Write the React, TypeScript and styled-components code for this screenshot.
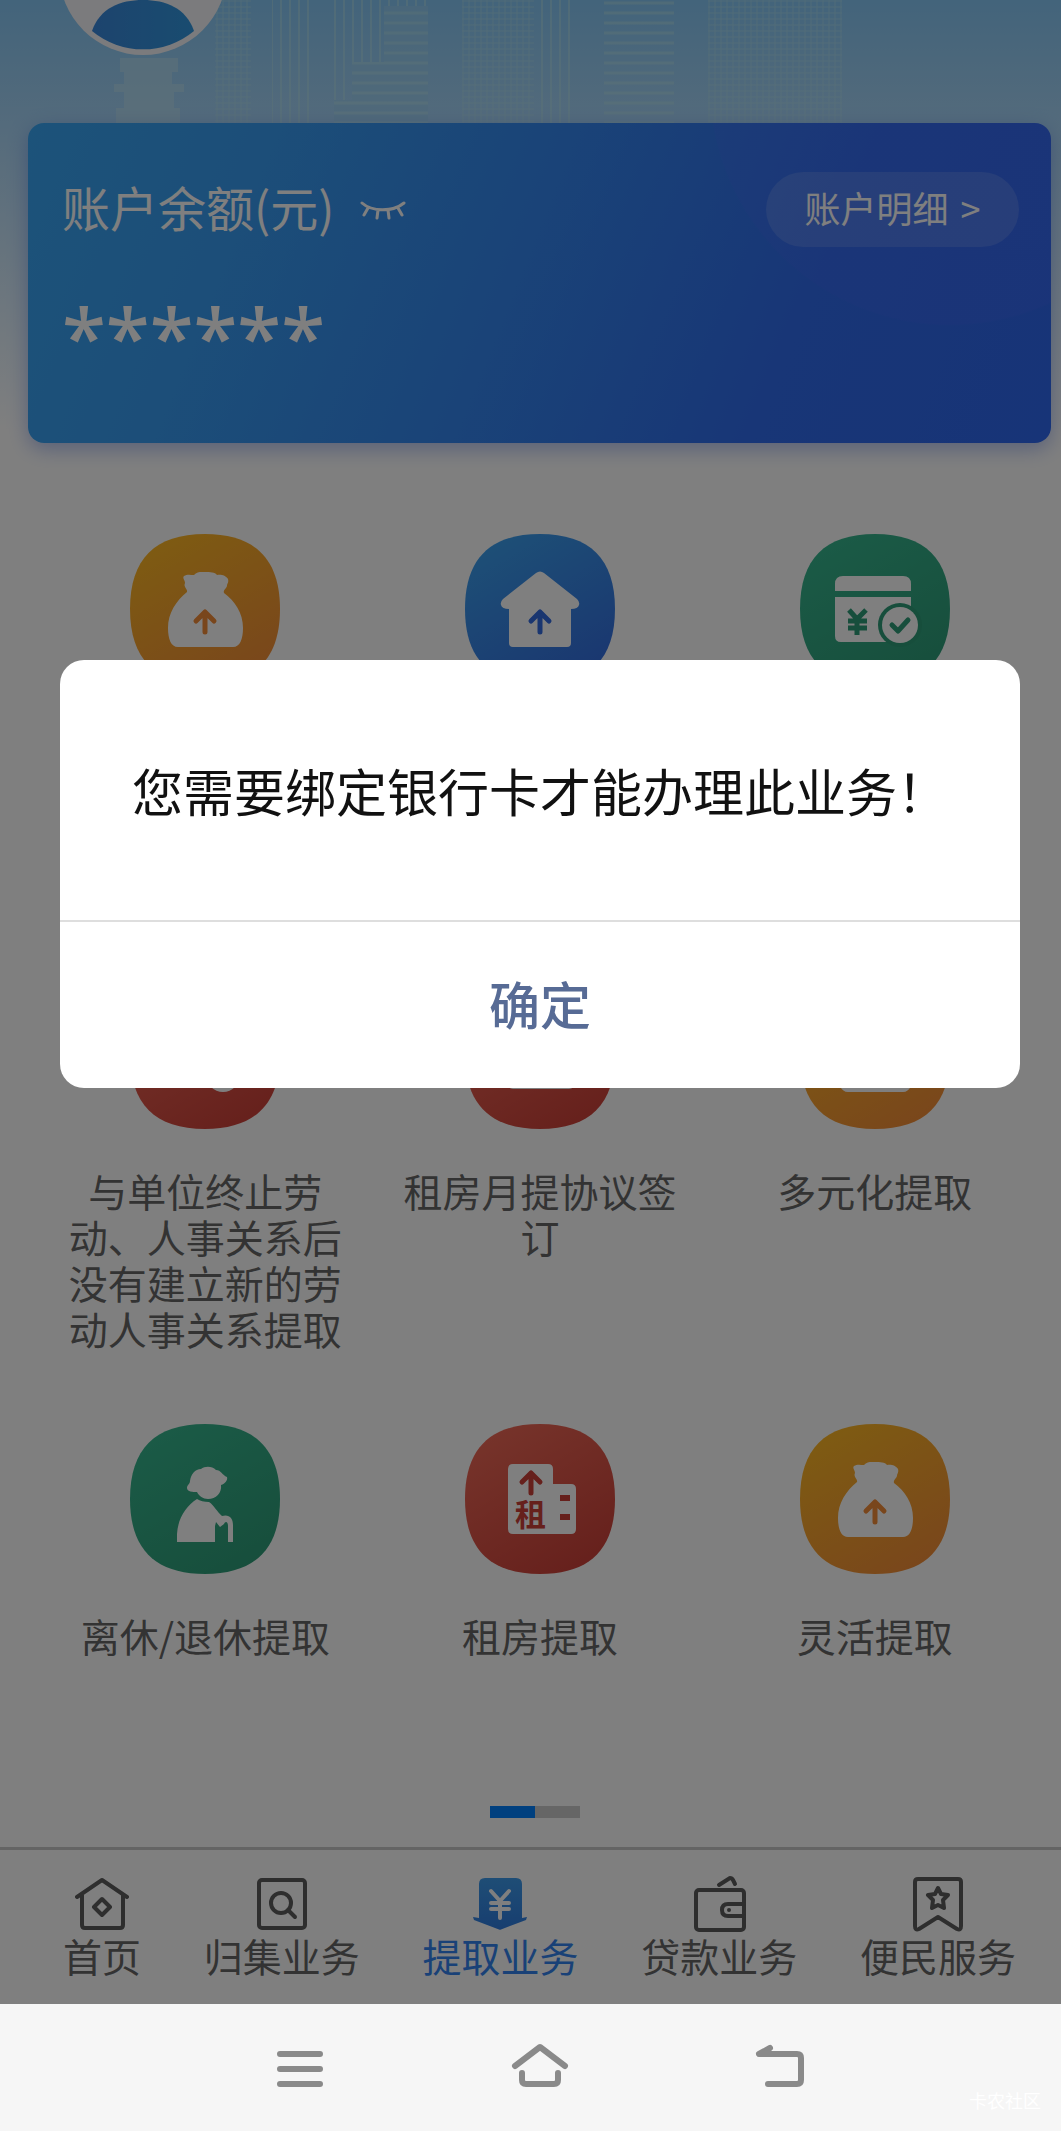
import React from "react";
import styled, { createGlobalStyle } from "styled-components";

const GlobalStyle = createGlobalStyle`
  *, *::before, *::after { box-sizing: border-box; }
  body {
    margin: 0;
    background: #f6f6f6;
    font-family: "Noto Sans CJK SC", "Noto Sans", sans-serif;
  }
  button { border: 0; padding: 0; background: none; font: inherit; color: inherit; cursor: pointer; }
  a { color: inherit; text-decoration: none; }
  svg { display: block; }
`;

const Phone = styled.div`
  display: flex;
  flex-direction: column;
  min-height: 100vh;
  overflow: hidden;
`;

const Screen = styled.div`
  position: relative;
  display: flex;
  flex-direction: column;
  flex: 1;
  background: linear-gradient(#86c8f6 0, #a8d6f8 123px, #ffffff 430px);
`;

const Banner = styled.header`
  height: 123px;
  overflow: hidden;
`;

const BalanceCard = styled.section`
  display: flex;
  flex-direction: column;
  height: 320px;
  margin: 0 10px 0 28px;
  padding: 49px 32px 0 34px;
  border-radius: 16px;
  background:
    radial-gradient(circle at 922px -38px, rgba(90, 100, 255, 0.12) 239px, transparent 241px),
    linear-gradient(112deg, #38a6f4 0%, #389cf2 22%, #3486f0 48%, #306cee 74%, #2f68f0 100%);
  box-shadow: 0 6px 20px rgba(60, 100, 220, 0.4);
  color: #fff;
`;

const BalanceHead = styled.div`
  display: flex;
  align-items: center;
  height: 75px;
`;

const BalanceTitle = styled.h1`
  margin: 0;
  padding-bottom: 6px;
  font-size: 48px;
  font-weight: 400;
  line-height: 69px;
`;

const EyeButton = styled.button`
  margin-left: 26px;
`;

const DetailLink = styled.a`
  display: flex;
  align-items: center;
  justify-content: center;
  gap: 12px;
  width: 253px;
  height: 75px;
  margin-left: auto;
  padding-bottom: 6px;
  border-radius: 38px;
  background: rgba(255, 255, 255, 0.13);
  font-size: 36px;
`;

const BalanceValue = styled.p`
  margin: 34px 0 0;
  font-family: "Noto Sans", sans-serif;
  font-size: 80px;
  font-weight: 500;
  line-height: 110px;
`;

const ServiceGrid = styled.main`
  display: grid;
  grid-template-columns: repeat(3, 1fr);
  grid-auto-rows: 1fr;
  row-gap: 73px;
  padding: 91px 19px 0 38px;
`;

const Service = styled.button`
  display: flex;
  flex-direction: column;
  align-items: center;
  gap: 38px;
  padding: 0 30px;
`;

const ServiceLabel = styled.span`
  color: #666;
  font-size: 39px;
  line-height: 46px;
  text-align: center;
`;

const Pager = styled.div`
  width: 90px;
  height: 12px;
  margin: 10px 0 29px 490px;
  background: #ccc;
`;

const PagerThumb = styled.div`
  width: 50%;
  height: 100%;
  background: #0080ff;
`;

const TabBar = styled.nav`
  display: flex;
  justify-content: space-between;
  height: 157px;
  margin-top: auto;
  padding: 26px 45px 0 63px;
  border-top: 3px solid #c8c8c8;
  background: #fff;
`;

const Tab = styled.a<{ $active?: boolean }>`
  display: flex;
  flex-direction: column;
  align-items: center;
  color: ${(p) => (p.$active ? "#3383ee" : "#666")};
  font-size: 39px;
  line-height: 46px;
`;

const Overlay = styled.div`
  position: absolute;
  inset: 0;
  padding: 660px 41px 0 60px;
  background: rgba(0, 0, 0, 0.5);
`;

const Dialog = styled.div`
  overflow: hidden;
  border-radius: 24px;
  background: #fff;
  font-size: 51px;
`;

const DialogMessage = styled.p`
  margin: 0;
  padding: 92px 24px;
  color: #111;
  line-height: 76px;
  text-align: center;
`;

const DialogConfirm = styled.button`
  width: 100%;
  height: 168px;
  padding-bottom: 4px;
  border-top: 2px solid #dedede;
  color: #576b95;
  font-weight: 500;
`;

const SystemBar = styled.footer`
  position: relative;
  display: flex;
  align-items: center;
  justify-content: center;
  gap: 180px;
  height: 127px;
  padding: 0 0 6px 19px;
  background: #f6f6f6;
`;

const Watermark = styled.span`
  position: absolute;
  right: 20px;
  bottom: 18px;
  color: #fff;
  font-size: 18px;
  line-height: 26px;
`;

const tones = {
  orange: ["#fdb824", "#f38c38"],
  blue: ["#3ba0ee", "#346ce0"],
  green: ["#36b68e", "#2e9c78"],
  red: ["#ee6856", "#cc4038"],
};
type Tone = keyof typeof tones;
type Glyph = "bag" | "house" | "card" | "person" | "contract" | "elder" | "rent";

const Up = ({ x = 75, y = 75, s = 1 }: { x?: number; y?: number; s?: number }) => (
  <path
    transform={`translate(${x} ${y}) scale(${s})`}
    d="M0 3V23M-9 12L0 3L9 12"
    fill="none"
    strokeWidth="5"
    strokeLinecap="round"
    strokeLinejoin="round"
  />
);

function GlyphShape({ glyph, tint }: { glyph: Glyph; tint: string }) {
  switch (glyph) {
    case "bag":
      return (
        <g>
          <path d="M57 58C58 55 53 53 55 49C55 46 52 44 54 42C57 40 61 41 64 41C67 37 73 38 75 38C80 38 85 38 87 41C90 40 96 41 98 45C99 49 97 49 97 52C96 55 93 56 94 59C105 67 113 79 113 94C113 105 110 113 103 113H48C41 113 38 105 38 94C38 79 46 67 57 58Z" />
          <g stroke={tint}><Up /></g>
        </g>
      );
    case "house":
      return (
        <g>
          <path d="M71 39Q75 36 79 39L112 65Q115 68 114 71Q113 75 106 75V109Q106 113 102 113H48Q44 113 44 109V75Q37 75 36 71Q35 68 38 65Z" />
          <g stroke={tint}><Up /></g>
        </g>
      );
    case "card":
      return (
        <g>
          <path d="M43 42H103Q111 42 111 50V57H35V50Q35 42 43 42ZM35 63H111V80H100V108H41Q35 108 35 102Z" />
          <path d="M49 76L57 85L66 76M48 87H67M48 94H67M57 86V101" fill="none" stroke={tint} strokeWidth="5" />
          <circle cx="100" cy="91" r="22" fill={tint} />
          <circle cx="100" cy="91" r="18" />
          <path d="M92 91L98 97L108 86" fill="none" stroke={tint} strokeWidth="5" strokeLinecap="round" strokeLinejoin="round" />
        </g>
      );
    case "person":
      return (
        <g>
          <circle cx="68" cy="54" r="15" />
          <path d="M40 104C40 82 52 74 68 74C78 74 86 78 90 85V104Z" />
          <circle cx="93" cy="96" r="17" />
        </g>
      );
    case "contract":
      return <rect x="42" y="42" width="68" height="68" rx="6" />;
    case "elder":
      return (
        <g>
          <path d="M67 68C63 68 57 68 57 64C57 61 60 60 60 57C61 50 65 45 71 45C75 42 82 42 86 46C91 46 92 51 97 53C98 56 95 60 91 61C92 69 86 75 78 75C73 75 69 72 67 68Z" />
          <path d="M47 118V110C48 94 56 82 67 75C70 77 74 78 79 78C84 81 87 88 92 92C99 90 103 94 103 101V118H98V102C98 97 95 97 94 100L90 103L86 98L85 102V118Z" />
        </g>
      );
    case "rent":
      return (
        <g>
          <path d="M48 40H83Q88 40 88 45V60H106Q111 60 111 65V105Q111 110 106 110H48Q43 110 43 105V45Q43 40 48 40Z" />
          <g stroke={tint}><Up x={66} y={46} /></g>
          <text x="50" y="102" fontSize="31" fontWeight="700" fill={tint}>租</text>
          <path d="M95 71H105V77H95ZM95 90H105V96H95Z" fill={tint} />
        </g>
      );
  }
}

function ServiceIcon({ glyph, tone, id }: { glyph: Glyph; tone: Tone; id: string }) {
  const [from, to] = tones[tone];
  return (
    <svg width="150" height="150" viewBox="0 0 150 150" aria-hidden="true">
      <defs>
        <linearGradient id={id} x1="0.2" y1="0" x2="0.8" y2="1">
          <stop offset="0" stopColor={from} />
          <stop offset="1" stopColor={to} />
        </linearGradient>
      </defs>
      <path d="M75 0C125 0 150 25 150 75C150 125 125 150 75 150C25 150 0 125 0 75C0 25 25 0 75 0Z" fill={`url(#${id})`} />
      <g fill="#fff"><GlyphShape glyph={glyph} tint={to} /></g>
    </svg>
  );
}

const services: { glyph: Glyph; tone: Tone; label?: string }[] = [
  { glyph: "bag", tone: "orange" },
  { glyph: "house", tone: "blue" },
  { glyph: "card", tone: "green" },
  { glyph: "person", tone: "red", label: "与单位终止劳动、人事关系后没有建立新的劳动人事关系提取" },
  { glyph: "contract", tone: "red", label: "租房月提协议签订" },
  { glyph: "bag", tone: "orange", label: "多元化提取" },
  { glyph: "elder", tone: "green", label: "离休/退休提取" },
  { glyph: "rent", tone: "red", label: "租房提取" },
  { glyph: "bag", tone: "orange", label: "灵活提取" },
];

const tabs = [
  {
    label: "首页",
    icon: <path d="M2 21L27 4L52 21M7 19V49Q7 52 10 52H45Q48 52 48 49V19M27 23L35 31L27 39L19 31Z" />,
  },
  {
    label: "归集业务",
    icon: (
      <>
        <rect x="4" y="4" width="46" height="48" rx="3" />
        <circle cx="26" cy="27" r="10" />
        <path d="M33 34L40 41" />
      </>
    ),
  },
  {
    label: "提取业务",
    active: true,
    icon: (
      <>
        <path d="M12 2H43Q49 2 49 8V42L54 41L53 44L28 53.500Q27 54 26 53.500L1 44L0 41L6 42V8Q6 2 12 2Z" fill="url(#tab-active)" stroke="none" />
        <path d="M18 15L27 25L36 15M18 27H36M18 33H36M27 26V42" stroke="#fff" />
      </>
    ),
  },
  {
    label: "贷款业务",
    icon: (
      <>
        <rect x="4" y="14" width="48" height="40" rx="3" />
        <path d="M27 9L38 2Q40 2 41 4L43 8M52 28H36Q30 28 30 34Q30 40 36 40H52" />
        <circle cx="37" cy="34" r="1" strokeWidth="2" />
      </>
    ),
  },
  {
    label: "便民服务",
    icon: (
      <path d="M7 3H47Q50 3 50 6V50Q50 55 46 53L27 41L8 53Q4 55 4 50V6Q4 3 7 3ZM27 12L30 18L37 19L32 24L33 32L27 29L21 32L22 24L17 19L24 18Z" />
    ),
  },
];

const towers = [
  { x: 215, w: 36, fill: "url(#grid)" },
  { x: 272, w: 42, fill: "url(#bars)" },
  { x: 330, w: 102, fill: "url(#bars)" },
  { x: 462, w: 72, fill: "url(#grid)" },
  { x: 538, w: 36, fill: "url(#bars)" },
  { x: 604, w: 70, fill: "url(#floors)" },
  { x: 708, w: 134, fill: "url(#grid)" },
];

function BannerArt() {
  return (
    <svg width="100%" height="123" viewBox="0 0 1061 123" preserveAspectRatio="xMinYMin slice" aria-hidden="true">
      <defs>
        <pattern id="bars" width="9" height="8" patternUnits="userSpaceOnUse">
          <path d="M2 0V8" stroke="#b8e6ee" strokeWidth="2" />
        </pattern>
        <pattern id="floors" width="8" height="10" patternUnits="userSpaceOnUse">
          <path d="M0 3H8" stroke="#b8e6ee" strokeWidth="3" />
        </pattern>
        <pattern id="grid" width="6" height="6" patternUnits="userSpaceOnUse">
          <path d="M0 1H6M1 0V6" stroke="#b8e6ee" strokeWidth="1" />
        </pattern>
        <linearGradient id="avatar" x1="0" x2="1">
          <stop offset="0" stopColor="#3a88dc" />
          <stop offset="1" stopColor="#3298e0" />
        </linearGradient>
        <linearGradient id="tab-active" x1="0" x2="0" y1="0" y2="1">
          <stop offset="0" stopColor="#3d9bec" />
          <stop offset="1" stopColor="#2f7ce0" />
        </linearGradient>
      </defs>
      <g opacity="0.5">
        {towers.map((t) => (
          <rect key={t.x} x={t.x} y="0" width={t.w} height="123" fill={t.fill} />
        ))}
        <path d="M384 6H428V123H334V100H352V62H384Z" fill="#9cd2f4" />
        <path d="M384 6H428V123H334V100H352V62H384Z" fill="url(#floors)" />
        <path d="M120 58H178V72H172V84H184V92H174V108H180V123H116V108H124V92H114V84H124V72H120Z" fill="#c2e6f2" />
      </g>
      <circle cx="143" cy="-29" r="84" fill="#f7f7fa" />
      <path d="M92 31C100 8 120 0 143 0C166 0 186 8 194 31A80 80 0 0 1 92 31Z" fill="url(#avatar)" />
    </svg>
  );
}

const SystemIcon = ({ d }: { d: string }) => (
  <svg width="60" height="60" viewBox="0 0 60 60" fill="none" stroke="#8a8a8a" strokeWidth="6" strokeLinecap="round" strokeLinejoin="round" aria-hidden="true">
    <path d={d} />
  </svg>
);

export default function App() {
  return (
    <Phone>
      <GlobalStyle />
      <Screen>
        <Banner><BannerArt /></Banner>
        <BalanceCard>
          <BalanceHead>
            <BalanceTitle>账户余额(元)</BalanceTitle>
            <EyeButton aria-label="显示余额">
              <svg width="46" height="20" viewBox="0 0 46 20" fill="none" stroke="#fff" strokeWidth="3" strokeLinecap="round" aria-hidden="true">
                <path d="M2 3C12 12 33 12 44 3M8 8L4 15M18 10L17 18M28 10L29 18M38 8L42 15" />
              </svg>
            </EyeButton>
            <DetailLink href="#detail">
              <span>账户明细</span>
              <span>&gt;</span>
            </DetailLink>
          </BalanceHead>
          <BalanceValue>******</BalanceValue>
        </BalanceCard>

        <ServiceGrid>
          {services.map((s, i) => (
            <Service key={i}>
              <ServiceIcon glyph={s.glyph} tone={s.tone} id={`tone-${i}`} />
              {s.label && <ServiceLabel>{s.label}</ServiceLabel>}
            </Service>
          ))}
        </ServiceGrid>
        <Pager><PagerThumb /></Pager>

        <TabBar>
          {tabs.map((t) => (
            <Tab key={t.label} href="#tab" $active={t.active}>
              <svg width="54" height="56" viewBox="0 0 54 56" fill="none" stroke="#5c5c5c" strokeWidth="4" strokeLinecap="round" strokeLinejoin="round" aria-hidden="true">
                {t.icon}
              </svg>
              {t.label}
            </Tab>
          ))}
        </TabBar>

        <Overlay>
          <Dialog role="alertdialog" aria-modal="true" aria-describedby="bind-card">
            <DialogMessage id="bind-card">您需要绑定银行卡才能办理此业务！</DialogMessage>
            <DialogConfirm>确定</DialogConfirm>
          </Dialog>
        </Overlay>
      </Screen>

      <SystemBar>
        <button aria-label="菜单"><SystemIcon d="M10 19H50M10 34H50M10 49H50" /></button>
        <button aria-label="主页"><SystemIcon d="M5 31L30 12L55 31M12 38V45Q12 49 16 49H44Q48 49 48 45V38" /></button>
        <button aria-label="返回"><SystemIcon d="M20 13L9 19H47Q51 19 51 23V45Q51 49 47 49H18" /></button>
        <Watermark>卡农社区</Watermark>
      </SystemBar>
    </Phone>
  );
}
